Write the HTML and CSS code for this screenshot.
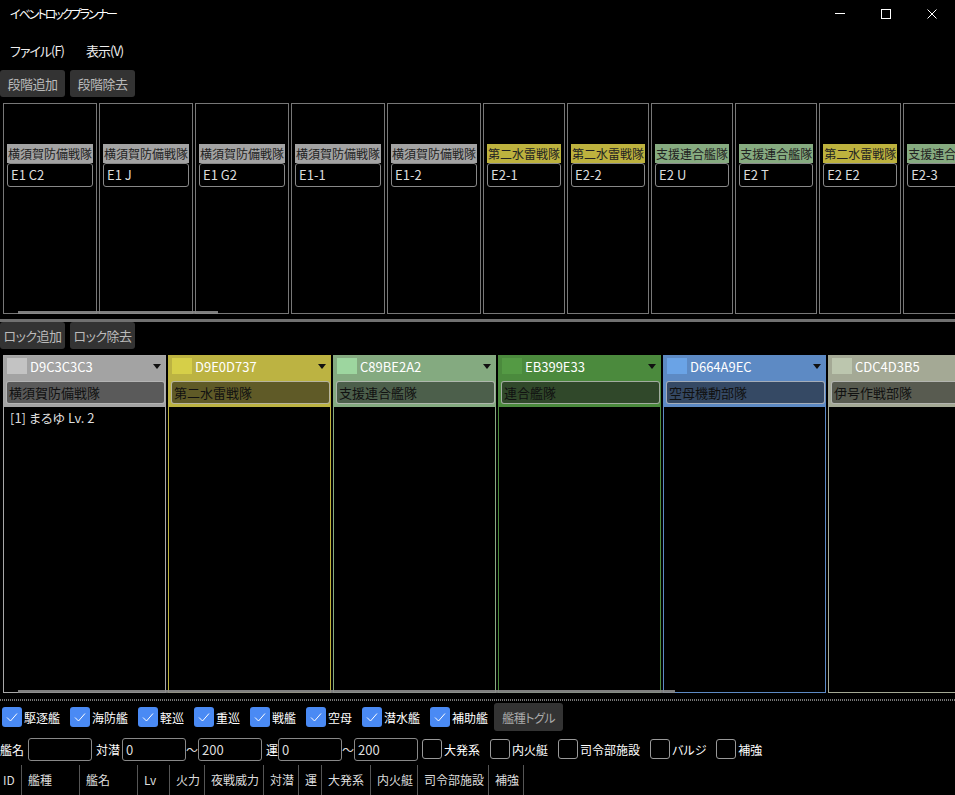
FILE: index.html
```html
<!DOCTYPE html>
<html lang="ja">
<head>
    <meta charset="UTF-8">
    <title>イベントロックプランナー</title>
    <link rel="stylesheet" href="styles.css">
</head>
<body>
    <div class="titlebar">
        <div class="app-title">イベントロックプランナー</div>
        <div class="win-buttons">
            <span class="win-btn"><svg width="10" height="10"><line x1="0" y1="4.5" x2="10" y2="4.5" stroke="#fff" stroke-width="1"/></svg></span>
            <span class="win-btn"><svg width="10" height="10"><rect x="0.5" y="0.5" width="9" height="9" fill="none" stroke="#fff" stroke-width="1"/></svg></span>
            <span class="win-btn"><svg width="10" height="10"><path d="M0.5 0.5 L9.5 9.5 M9.5 0.5 L0.5 9.5" stroke="#fff" stroke-width="1"/></svg></span>
        </div>
    </div>

    <div class="menubar">
        <span class="menu-item">ファイル(F)</span>
        <span class="menu-item">表示(V)</span>
    </div>

    <div class="toolbar">
        <button class="tool-btn">段階追加</button>
        <button class="tool-btn">段階除去</button>
    </div>

    <!-- 段階 -->
    <div class="stage-panel">
        <div class="stage-list">
            <div class="stage"><div class="stage-label gray">横須賀防備戦隊</div><div class="stage-box">E1 C2</div></div>
            <div class="stage"><div class="stage-label gray">横須賀防備戦隊</div><div class="stage-box">E1 J</div></div>
            <div class="stage"><div class="stage-label gray">横須賀防備戦隊</div><div class="stage-box">E1 G2</div></div>
            <div class="stage"><div class="stage-label gray">横須賀防備戦隊</div><div class="stage-box">E1-1</div></div>
            <div class="stage"><div class="stage-label gray">横須賀防備戦隊</div><div class="stage-box">E1-2</div></div>
            <div class="stage"><div class="stage-label yellow">第二水雷戦隊</div><div class="stage-box">E2-1</div></div>
            <div class="stage"><div class="stage-label yellow">第二水雷戦隊</div><div class="stage-box">E2-2</div></div>
            <div class="stage"><div class="stage-label green">支援連合艦隊</div><div class="stage-box">E2 U</div></div>
            <div class="stage"><div class="stage-label green">支援連合艦隊</div><div class="stage-box">E2 T</div></div>
            <div class="stage"><div class="stage-label yellow">第二水雷戦隊</div><div class="stage-box">E2 E2</div></div>
            <div class="stage"><div class="stage-label green">支援連合艦隊</div><div class="stage-box">E2-3</div></div>
        </div>
        <div class="hscroll stage-scroll"></div>
    </div>

    <div class="splitter"></div>

    <div class="toolbar lock-toolbar">
        <button class="tool-btn">ロック追加</button>
        <button class="tool-btn">ロック除去</button>
    </div>

    <!-- ロック -->
    <div class="lock-panel">
        <div class="lock-list">
            <div class="lock c1">
                <div class="lock-head">
                    <div class="lock-top"><span class="swatch"></span><span class="hex">D9C3C3C3</span><span class="arrow"></span></div>
                    <div class="lock-name">横須賀防備戦隊</div>
                </div>
                <div class="lock-body"><div class="ship">[1] まるゆ Lv. 2</div></div>
            </div>
            <div class="lock c2">
                <div class="lock-head">
                    <div class="lock-top"><span class="swatch"></span><span class="hex">D9E0D737</span><span class="arrow"></span></div>
                    <div class="lock-name">第二水雷戦隊</div>
                </div>
                <div class="lock-body"></div>
            </div>
            <div class="lock c3">
                <div class="lock-head">
                    <div class="lock-top"><span class="swatch"></span><span class="hex">C89BE2A2</span><span class="arrow"></span></div>
                    <div class="lock-name">支援連合艦隊</div>
                </div>
                <div class="lock-body"></div>
            </div>
            <div class="lock c4">
                <div class="lock-head">
                    <div class="lock-top"><span class="swatch"></span><span class="hex">EB399E33</span><span class="arrow"></span></div>
                    <div class="lock-name">連合艦隊</div>
                </div>
                <div class="lock-body"></div>
            </div>
            <div class="lock c5">
                <div class="lock-head">
                    <div class="lock-top"><span class="swatch"></span><span class="hex">D664A9EC</span><span class="arrow"></span></div>
                    <div class="lock-name">空母機動部隊</div>
                </div>
                <div class="lock-body"></div>
            </div>
            <div class="lock c6">
                <div class="lock-head">
                    <div class="lock-top"><span class="swatch"></span><span class="hex">CDC4D3B5</span><span class="arrow"></span></div>
                    <div class="lock-name">伊号作戦部隊</div>
                </div>
                <div class="lock-body"></div>
            </div>
        </div>
        <div class="hscroll lock-scroll"></div>
    </div>

    <div class="dot-splitter"></div>

    <!-- 艦種フィルタ -->
    <div class="type-row">
        <label class="check"><span class="cb on"><svg width="20" height="20"><polyline points="5,10.5 8.5,14 15,6.5" fill="none" stroke="#fff" stroke-width="1"/></svg></span>駆逐艦</label>
        <label class="check"><span class="cb on"><svg width="20" height="20"><polyline points="5,10.5 8.5,14 15,6.5" fill="none" stroke="#fff" stroke-width="1"/></svg></span>海防艦</label>
        <label class="check"><span class="cb on"><svg width="20" height="20"><polyline points="5,10.5 8.5,14 15,6.5" fill="none" stroke="#fff" stroke-width="1"/></svg></span>軽巡</label>
        <label class="check"><span class="cb on"><svg width="20" height="20"><polyline points="5,10.5 8.5,14 15,6.5" fill="none" stroke="#fff" stroke-width="1"/></svg></span>重巡</label>
        <label class="check"><span class="cb on"><svg width="20" height="20"><polyline points="5,10.5 8.5,14 15,6.5" fill="none" stroke="#fff" stroke-width="1"/></svg></span>戦艦</label>
        <label class="check"><span class="cb on"><svg width="20" height="20"><polyline points="5,10.5 8.5,14 15,6.5" fill="none" stroke="#fff" stroke-width="1"/></svg></span>空母</label>
        <label class="check"><span class="cb on"><svg width="20" height="20"><polyline points="5,10.5 8.5,14 15,6.5" fill="none" stroke="#fff" stroke-width="1"/></svg></span>潜水艦</label>
        <label class="check"><span class="cb on"><svg width="20" height="20"><polyline points="5,10.5 8.5,14 15,6.5" fill="none" stroke="#fff" stroke-width="1"/></svg></span>補助艦</label>
        <button class="tool-btn toggle-btn">艦種トグル</button>
    </div>

    <!-- 条件 -->
    <div class="filter-row">
        <span class="f-label w28">艦名</span><span class="field"></span>
        <span class="f-label w26">対潜</span><span class="field">0</span><span class="tilde">〜</span><span class="field">200</span>
        <span class="f-label w12">運</span><span class="field">0</span><span class="tilde">〜</span><span class="field">200</span>
        <label class="check"><span class="cb"></span>大発系</label>
        <label class="check"><span class="cb"></span>内火艇</label>
        <label class="check"><span class="cb"></span>司令部施設</label>
        <label class="check"><span class="cb"></span>バルジ</label>
        <label class="check"><span class="cb"></span>補強</label>
    </div>

    <!-- 一覧 -->
    <div class="grid-head">
        <span class="col w-id">ID</span>
        <span class="col w-type">艦種</span>
        <span class="col w-name">艦名</span>
        <span class="col w-lv">Lv</span>
        <span class="col w-fp">火力</span>
        <span class="col w-night">夜戦威力</span>
        <span class="col w-asw">対潜</span>
        <span class="col w-luck">運</span>
        <span class="col w-daihatsu">大発系</span>
        <span class="col w-tank">内火艇</span>
        <span class="col w-hq">司令部施設</span>
        <span class="col w-bulge">補強</span>
    </div>
</body>
</html>
```

FILE: styles.css
```css
body {
    margin: 0;
    width: 955px;
    height: 795px;
    overflow: hidden;
    background-color: #000;
    color: #fff;
    font-family: "Noto Sans CJK JP", "Noto Sans", sans-serif;
    font-size: 13px;
    font-feature-settings: "palt";
}

button {
    font-family: inherit;
    font-feature-settings: "palt";
}

/* タイトルバー */
.titlebar {
    height: 30px;
    display: flex;
    justify-content: space-between;
}

.app-title {
    padding-left: 10px;
    font-size: 12px;
    letter-spacing: -2px;
    line-height: 28px;
}

.win-buttons {
    display: flex;
}

.win-btn {
    width: 46px;
    display: flex;
    justify-content: center;
    padding-top: 9px;
}

.menubar {
    height: 40px;
    display: flex;
    align-items: center;
    padding-left: 10px;
    gap: 22px;
}

.menu-item {
    font-size: 13px;
    letter-spacing: -1px;
    color: #eee;
}

.toolbar {
    height: 32px;
    display: flex;
    gap: 5px;
}

.tool-btn {
    width: 65px;
    height: 27px;
    padding: 0;
    border: none;
    border-radius: 3px;
    background-color: #333;
    color: #bbb;
    font-size: 13px;
    letter-spacing: -0.5px;
    white-space: nowrap;
}

/* 段階 */
.stage-panel {
    position: relative;
    height: 213px;
    padding-top: 1px;
    box-sizing: border-box;
    overflow: hidden;
}

.stage-list {
    display: flex;
    gap: 2px;
    padding-left: 3px;
}

.stage {
    flex: none;
    height: 211px;
    box-sizing: border-box;
    border: 1px solid #777;
    padding: 40px 3px 0;
}

.stage-label {
    height: 19px;
    line-height: 19px;
    padding: 0 1px;
    font-size: 12px;
    color: #222;
    white-space: nowrap;
    font-feature-settings: normal;
}

.stage-label.gray { background-color: #a3a3a3; }
.stage-label.yellow { background-color: #bdb23e; }
.stage-label.green { background-color: #86ab80; }

.stage-box {
    height: 24px;
    box-sizing: border-box;
    border: 1px solid #888;
    border-radius: 3px;
    padding-left: 3px;
    line-height: 21px;
    font-size: 13px;
    color: #ddd;
}

.hscroll {
    position: absolute;
    left: 18px;
    height: 3px;
    background-color: rgba(140, 140, 140, 0.9);
}

.stage-scroll {
    top: 209px;
    width: 200px;
}

.splitter {
    height: 3px;
    margin-top: 4px;
    background-color: #707070;
}

.lock-toolbar {
    height: 33px;
}

/* ロック */
.lock-panel {
    position: relative;
    height: 338px;
    overflow: hidden;
}

.lock-list {
    display: flex;
    gap: 2px;
    padding-left: 3px;
}

.lock {
    flex: none;
    width: 163px;
    height: 338px;
    box-sizing: border-box;
    border: 1px solid;
    display: flex;
    flex-direction: column;
}

.lock-head {
    padding: 1px 0 3px 2px;
}

.lock-top {
    height: 18px;
    display: flex;
    align-items: center;
}

.swatch {
    width: 20px;
    height: 16px;
    margin-left: 1px;
}

.hex {
    margin-left: 3px;
    flex: 1;
    font-size: 13px;
    color: #fff;
}

.arrow {
    width: 0;
    height: 0;
    margin-right: 4px;
    border-left: 4px solid transparent;
    border-right: 4px solid transparent;
    border-top: 5px solid #111;
}

.lock-name {
    margin-top: 6px;
    height: 23px;
    box-sizing: border-box;
    border: 1px solid rgba(255, 255, 255, 0.55);
    border-radius: 3px;
    padding-left: 2px;
    line-height: 21px;
    font-size: 13px;
    color: #111;
    font-feature-settings: normal;
}

.lock-body {
    flex: 1;
    background-color: #000;
    padding: 1px 6px;
}

.ship {
    font-size: 13px;
    color: #ddd;
}

.c1 { border-color: #a8a8a8; }
.c1 .lock-head { background-color: #a3a3a3; }
.c1 .swatch { background-color: #c3c3c3; }
.c1 .lock-name { background-color: #5a5a5a; }

.c2 { border-color: #bdb23e; }
.c2 .lock-head { background-color: #bcb342; }
.c2 .swatch { background-color: #d6cf48; }
.c2 .lock-name { background-color: #5f5a27; }

.c3 { border-color: #86ab80; }
.c3 .lock-head { background-color: #84aa80; }
.c3 .swatch { background-color: #9dd69f; }
.c3 .lock-name { background-color: #4c5f4b; }

.c4 { border-color: #4b8a3d; }
.c4 .lock-head { background-color: #4b8a3d; }
.c4 .swatch { background-color: #549a44; }
.c4 .lock-name { background-color: #30482a; }

.c5 { border-color: #5d8ac4; }
.c5 .lock-head { background-color: #5d8ac4; }
.c5 .swatch { background-color: #6aa3e6; }
.c5 .lock-name { background-color: #354964; }

.c6 { border-color: #a4a995; }
.c6 .lock-head { background-color: #a4a995; }
.c6 .swatch { background-color: #bcc6ae; }
.c6 .lock-name { background-color: #585b50; }

.lock-scroll {
    top: 335px;
    width: 657px;
}

.dot-splitter {
    height: 2px;
    margin-top: 6px;
    background-image: repeating-linear-gradient(90deg, #777 0 1px, transparent 1px 2px);
}

/* フィルタ */
.type-row {
    height: 28px;
    margin-top: 2px;
    display: flex;
    align-items: center;
    padding-left: 2px;
}

.check {
    display: flex;
    align-items: center;
    gap: 2px;
    margin-right: 10px;
    font-size: 12px;
    white-space: nowrap;
    color: #fff;
}

.cb {
    flex: none;
    width: 20px;
    height: 20px;
    box-sizing: border-box;
    border: 1px solid #999;
    border-radius: 3px;
    background-color: #000;
}

.cb.on {
    border: none;
    background-color: #4a8af4;
}

.cb svg {
    display: block;
}

.toggle-btn {
    height: 28px;
    width: 69px;
    margin-left: -4px;
    font-size: 12px;
    color: #aaa;
}

.filter-row {
    height: 28px;
    margin-top: 4px;
    display: flex;
    align-items: center;
}

.f-label {
    flex: none;
    font-size: 12px;
}

.w28 { width: 28px; }
.w26 { width: 26px; }
.w12 { width: 12px; }

.field {
    flex: none;
    width: 64px;
    height: 23px;
    box-sizing: border-box;
    border: 1px solid #888;
    border-radius: 3px;
    margin-right: 4px;
    padding-left: 3px;
    line-height: 21px;
    color: #ddd;
}

.tilde {
    flex: none;
    margin-left: -4px;
    width: 12px;
    font-size: 12px;
    color: #ddd;
}

/* 一覧ヘッダ */
.grid-head {
    height: 30px;
    margin-top: 2px;
    display: flex;
}

.col {
    flex: none;
    box-sizing: border-box;
    border-right: 1px solid #555;
    padding-left: 6px;
    line-height: 30px;
    font-size: 12px;
    white-space: nowrap;
    color: #ddd;
}

.w-id { width: 22px; padding-left: 3px; }
.w-type { width: 58px; }
.w-name { width: 58px; }
.w-lv { width: 32px; }
.w-fp { width: 35px; }
.w-night { width: 59px; }
.w-asw { width: 35px; }
.w-luck { width: 23px; }
.w-daihatsu { width: 49px; }
.w-tank { width: 47px; }
.w-hq { width: 71px; }
.w-bulge { width: 35px; }
```
